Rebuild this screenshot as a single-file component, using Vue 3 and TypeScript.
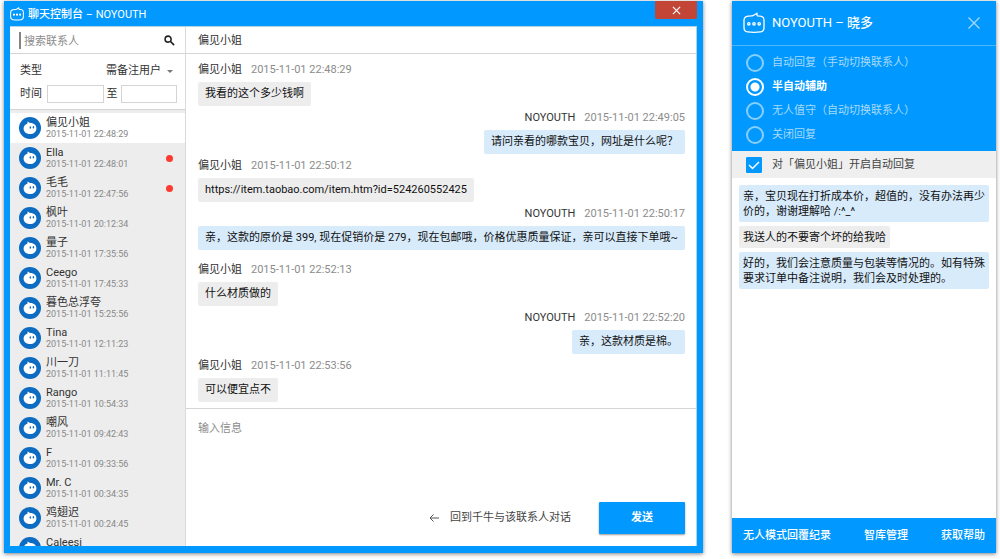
<script setup lang="ts">
import { ref } from 'vue'

interface Contact {
  name: string
  time: string
  unread?: boolean
}

interface Message {
  author: string
  time: string
  text: string
  own?: boolean
}

const shop = 'NOYOUTH'
const customer = '偏见小姐'

const contacts: Contact[] = [
  { name: customer, time: '2015-11-01 22:48:29' },
  { name: 'Ella', time: '2015-11-01 22:48:01', unread: true },
  { name: '毛毛', time: '2015-11-01 22:47:56', unread: true },
  { name: '枫叶', time: '2015-11-01 20:12:34' },
  { name: '量子', time: '2015-11-01 17:35:56' },
  { name: 'Ceego', time: '2015-11-01 17:45:33' },
  { name: '暮色总浮夸', time: '2015-11-01 15:25:56' },
  { name: 'Tina', time: '2015-11-01 12:11:23' },
  { name: '川一刀', time: '2015-11-01 11:11:45' },
  { name: 'Rango', time: '2015-11-01 10:54:33' },
  { name: '嘲风', time: '2015-11-01 09:42:43' },
  { name: 'F', time: '2015-11-01 09:33:56' },
  { name: 'Mr. C', time: '2015-11-01 00:34:35' },
  { name: '鸡翅迟', time: '2015-11-01 00:24:45' },
  { name: 'Caleesi', time: '' },
]

const sessions: Message[][] = [
  [
    { author: customer, time: '2015-11-01 22:48:29', text: '我看的这个多少钱啊' },
    { author: shop, time: '2015-11-01 22:49:05', text: '请问亲看的哪款宝贝，网址是什么呢？', own: true },
    { author: customer, time: '2015-11-01 22:50:12', text: 'https://item.taobao.com/item.htm?id=524260552425' },
    {
      author: shop,
      time: '2015-11-01 22:50:17',
      text: '亲，这款的原价是 399, 现在促销价是 279，现在包邮哦，价格优惠质量保证，亲可以直接下单哦~',
      own: true,
    },
  ],
  [
    { author: customer, time: '2015-11-01 22:52:13', text: '什么材质做的' },
    { author: shop, time: '2015-11-01 22:52:20', text: '亲，这款材质是棉。', own: true },
    { author: customer, time: '2015-11-01 22:53:56', text: '可以便宜点不' },
  ],
]

const modes = ['自动回复（手动切换联系人）', '半自动辅助', '无人值守（自动切换联系人）', '关闭回复']

const suggestions = [
  { text: '亲，宝贝现在打折成本价，超值的，没有办法再少价的，谢谢理解哈 /:^_^', own: true },
  { text: '我送人的不要寄个坏的给我哈', own: false },
  { text: '好的，我们会注意质量与包装等情况的。如有特殊要求订单中备注说明，我们会及时处理的。', own: true },
]

const links = ['无人模式回覆纪录', '智库管理', '获取帮助']

const active = ref(0)
const mode = ref(1)
const autoReply = ref(true)
const keyword = ref('')
const from = ref('')
const to = ref('')
const kind = ref('需备注用户')
const draft = ref('')
</script>

<template>
  <div class="desktop">
    <section class="window">
      <header class="titlebar">
        <svg class="logo-small" viewBox="0 0 22 22" aria-hidden="true">
          <path d="M5 4.200C7 3.900 8.500 3.900 9.300 3.800C11 3.200 12.500 2.300 14 1.200C13.900 2.200 14 3 14.300 3.800C15.500 3.800 16.500 3.900 17.500 4.100C20 4.500 21 5.800 21 8V15.500C21 18.500 20 19.600 17.500 19.900C13 20.500 9 20.500 4.500 19.900C2 19.600 1 18.500 1 15.500V8.500C1 6 2.200 4.600 5 4.200Z" />
          <circle cx="6.200" cy="12" r="0.900" /><circle cx="11" cy="12" r="0.900" /><circle cx="15.800" cy="12" r="0.900" />
        </svg>
        <h1>聊天控制台 <span>– {{ shop }}</span></h1>
        <button class="close" type="button" aria-label="关闭">
          <svg viewBox="0 0 10 10" aria-hidden="true"><path d="M1 1L9 9M9 1L1 9" /></svg>
        </button>
      </header>

      <div class="body">
        <aside class="sidebar">
          <label class="search">
            <input v-model="keyword" type="text" placeholder="搜索联系人" aria-label="搜索联系人" />
            <svg viewBox="0 0 12 12" aria-hidden="true">
              <circle cx="4.500" cy="4.500" r="3.300" /><path d="M7 7L11 11" />
            </svg>
          </label>
          <div class="filters">
            <div class="filter">
              <label for="kind">类型</label>
              <select id="kind" v-model="kind">
                <option>需备注用户</option>
              </select>
              <svg class="arrow" viewBox="0 0 6 3" aria-hidden="true"><path d="M0 0H6L3 3Z" /></svg>
            </div>
            <div class="filter">
              <label for="from">时间</label>
              <input id="from" v-model="from" type="text" />
              <label for="to">至</label>
              <input id="to" v-model="to" type="text" />
            </div>
          </div>
          <ul class="contacts">
            <li v-for="(c, i) in contacts" :key="c.name">
              <button class="contact" :class="{ active: i === active }" type="button" @click="active = i">
                <svg class="avatar" viewBox="0 0 22 22" aria-hidden="true">
                  <circle cx="11" cy="11" r="11" fill="#0d6cc1" />
                  <path
                    d="M8.300 4.800C9.600 4.800 10.200 5.400 10.800 6.100C14.900 5.900 17.500 8.300 17.400 11.500C17.300 15 14.700 17 11 17C7.200 17 4.600 14.800 4.600 11.500C4.600 9.200 6 7.300 8.200 6.700C8.700 6.200 8.700 5.400 8.300 4.800Z"
                    fill="#fff"
                  />
                  <ellipse cx="11.300" cy="10.500" rx="0.700" ry="1.300" fill="#0d6cc1" />
                  <ellipse cx="14.400" cy="10.300" rx="0.700" ry="1.300" fill="#0d6cc1" />
                </svg>
                <span class="who">
                  <span class="name">{{ c.name }}</span>
                  <time>{{ c.time }}</time>
                </span>
                <span v-if="c.unread" class="dot"></span>
              </button>
            </li>
          </ul>
        </aside>

        <main class="chat">
          <h2>{{ customer }}</h2>
          <div class="history">
            <div v-for="(session, s) in sessions" :key="s" class="session">
              <article v-for="m in session" :key="m.time" class="message" :class="{ own: m.own }">
                <div class="meta">
                  <span>{{ m.author }}</span>
                  <time>{{ m.time }}</time>
                </div>
                <p class="bubble">{{ m.text }}</p>
              </article>
            </div>
          </div>
          <form class="composer" @submit.prevent="draft = ''">
            <textarea v-model="draft" placeholder="输入信息" aria-label="输入信息"></textarea>
            <div class="actions">
              <a href="#">
                <svg viewBox="0 0 10 8" aria-hidden="true"><path d="M10 4H1M4.500 0.500L1 4L4.500 7.500" /></svg>
                回到千牛与该联系人对话
              </a>
              <button type="submit">发送</button>
            </div>
          </form>
        </main>
      </div>
    </section>

    <section class="panel">
      <header class="panel-head">
        <svg class="logo" viewBox="0 0 22 22" aria-hidden="true">
          <path d="M5 4.200C7 3.900 8.500 3.900 9.300 3.800C11 3.200 12.500 2.300 14 1.200C13.900 2.200 14 3 14.300 3.800C15.500 3.800 16.500 3.900 17.500 4.100C20 4.500 21 5.800 21 8V15.500C21 18.500 20 19.600 17.500 19.900C13 20.500 9 20.500 4.500 19.900C2 19.600 1 18.500 1 15.500V8.500C1 6 2.200 4.600 5 4.200Z" />
          <circle cx="5.800" cy="11.800" r="1.200" /><circle cx="11" cy="11.800" r="1.200" /><circle cx="16.200" cy="11.800" r="1.200" />
        </svg>
        <h2>{{ shop }} – <b>晓多</b></h2>
        <button type="button" aria-label="关闭">
          <svg viewBox="0 0 12 12" aria-hidden="true"><path d="M0.500 0.500L11.500 11.500M11.500 0.500L0.500 11.500" /></svg>
        </button>
      </header>
      <div class="modes" role="radiogroup" aria-label="回复模式">
        <label v-for="(label, i) in modes" :key="label" :class="{ on: i === mode }">
          <input v-model="mode" type="radio" name="mode" :value="i" />
          {{ label }}
        </label>
      </div>
      <label class="auto">
        <input v-model="autoReply" type="checkbox" />
        对「{{ customer }}」开启自动回复
      </label>
      <div class="suggestions">
        <p v-for="s in suggestions" :key="s.text" :class="{ own: s.own }">{{ s.text }}</p>
      </div>
      <nav>
        <a v-for="l in links" :key="l" href="#">{{ l }}</a>
      </nav>
    </section>
  </div>
</template>

<style>
body {
  margin: 0;
  background: #fff;
}
</style>

<style scoped>
.desktop,
.desktop * {
  box-sizing: border-box;
}

.desktop {
  display: grid;
  grid-template-columns: minmax(0, 1fr) 264px;
  grid-template-rows: minmax(0, 1fr);
  gap: 29px;
  height: 100vh;
  padding: 1px 4px 6px;
  font: 11px/16px Roboto, 'Noto Sans CJK SC', sans-serif;
  color: #333;
}

h1,
h2,
p,
ul {
  margin: 0;
  padding: 0;
}

h1,
h2 {
  font-size: 11px;
  font-weight: 400;
}

button,
input,
select,
textarea {
  margin: 0;
  padding: 0;
  border: 0;
  border-radius: 0;
  outline: 0;
  background: none;
  font: inherit;
  color: inherit;
}

button {
  cursor: pointer;
}

svg {
  flex: none;
}

.window,
.panel {
  display: flex;
  flex-direction: column;
  min-height: 0;
  box-shadow: 0 1px 4px rgba(0, 0, 0, 0.5);
}

.window {
  padding: 0 6px 7px;
  background: #0198ff;
}

.titlebar {
  display: flex;
  align-items: center;
  height: 25px;
  color: #fff;
}

.titlebar h1 {
  flex: 1;
  padding: 2px 0 0 4px;
  font-weight: 500;
}

.titlebar h1 span {
  font-weight: 400;
}

.logo-small {
  width: 14px;
  height: 14px;
}

.logo-small,
.logo {
  fill: none;
  stroke: #fff;
  stroke-width: 1.3;
  stroke-linejoin: round;
}

.logo-small {
  stroke-width: 1.6;
}

.close {
  display: flex;
  align-items: center;
  justify-content: center;
  align-self: flex-start;
  width: 42px;
  height: 18px;
  border-radius: 0 0 2px 2px;
  background: #c24535;
}

.close svg {
  width: 9px;
  height: 9px;
  fill: none;
  stroke: #fff;
  stroke-width: 1.3;
}

.body {
  display: grid;
  grid-template-columns: 176px minmax(0, 1fr);
  flex: 1;
  min-height: 0;
  border: solid #b5d3e8;
  border-width: 1px 1px 0 0;
  background: #fff;
}

.sidebar {
  display: flex;
  flex-direction: column;
  min-height: 0;
  border-right: 1px solid #dadada;
}

.search {
  display: flex;
  align-items: center;
  height: 27px;
  padding: 0 10px 0 9px;
  border-bottom: 1px solid #d4d4d4;
}

.search input {
  flex: 1;
  min-width: 0;
  height: 17px;
  padding: 2px 0 0 3px;
  border-left: 2px solid #858585;
}

.search svg {
  width: 11px;
  height: 11px;
  fill: none;
  stroke: #222;
  stroke-width: 1.7;
}

::placeholder {
  color: #8c8c8c;
  opacity: 1;
}

.filters {
  display: flex;
  flex-direction: column;
  gap: 5px;
  padding: 8px 8px 6px 10px;
  border-bottom: 1px solid #d4d4d4;
}

.filter {
  display: flex;
  align-items: center;
  gap: 3px;
  height: 18px;
}

.filter label:first-child {
  margin-right: 2px;
}

.filter select {
  margin-left: auto;
  appearance: none;
  text-align: right;
}

.arrow {
  width: 6px;
  height: 3px;
  margin: 0 4px 0 3px;
  fill: #777;
}

.filter input {
  flex: 1;
  min-width: 0;
  height: 18px;
  border: 1px solid #d4d4d4;
}

.contacts {
  flex: 1;
  min-height: 0;
  overflow: hidden;
  padding-top: 3px;
  background: #ededed;
  list-style: none;
}

.contact {
  display: flex;
  align-items: center;
  gap: 5px;
  width: 100%;
  height: 30px;
  padding: 0 12px 0 9px;
  text-align: left;
}

.contact.active {
  background: #fff;
}

.avatar {
  width: 22px;
  height: 22px;
}

.who {
  display: flex;
  flex: 1;
  flex-direction: column;
}

.name {
  line-height: 13px;
}

.who time {
  height: 11px;
  font-size: 9px;
  line-height: 11px;
  color: #888;
}

.dot {
  width: 7px;
  height: 7px;
  border-radius: 50%;
  background: #fb3b30;
}

.chat {
  display: flex;
  flex-direction: column;
  min-width: 0;
  min-height: 0;
}

.chat h2 {
  height: 27px;
  padding-left: 12px;
  border-bottom: 1px solid #d4d4d4;
  line-height: 28px;
}

.history {
  display: flex;
  flex-direction: column;
  gap: 12px;
  padding: 8px 11px 6px 8px;
  border-bottom: 1px solid #d4d4d4;
}

.session {
  display: flex;
  flex-direction: column;
  gap: 4px;
}

.message {
  display: flex;
  flex-direction: column;
  align-items: flex-start;
  gap: 4px;
  padding-left: 4px;
}

.message.own {
  align-items: flex-end;
  padding-left: 0;
}

.meta {
  display: flex;
  gap: 9px;
}

.meta time {
  color: #8c8c8c;
}

.bubble {
  padding: 4px 7px;
  border-radius: 2px;
  background: #ededed;
  color: #111;
}

.own .bubble {
  background: #d7ebfb;
}

.composer {
  display: flex;
  flex: 1;
  flex-direction: column;
  min-height: 0;
  padding: 12px 11px 12px 12px;
}

.composer textarea {
  flex: 1;
  min-height: 0;
  resize: none;
}

.actions {
  display: flex;
  align-items: center;
  justify-content: flex-end;
  gap: 28px;
}

.actions a {
  display: flex;
  align-items: center;
  gap: 11px;
  color: #444;
  text-decoration: none;
}

.actions svg {
  width: 10px;
  height: 8px;
  fill: none;
  stroke: #555;
}

.actions button {
  width: 86px;
  height: 32px;
  border-radius: 1px;
  background: #0198ff;
  box-shadow: 0 1px 2px rgba(0, 0, 0, 0.4);
  color: #fff;
  font-weight: 700;
}

.panel {
  background: #fff;
}

.panel-head {
  display: flex;
  align-items: center;
  height: 45px;
  padding: 0 16px 0 11px;
  border-bottom: 1px solid #4db5fb;
  background: #0198ff;
  color: #fff;
}

.logo {
  width: 22px;
  height: 22px;
}

.panel-head h2 {
  flex: 1;
  padding-left: 7px;
  font-size: 13px;
}

.panel-head b {
  font-weight: 500;
}

.panel-head button {
  display: flex;
}

.panel-head button svg {
  width: 12px;
  height: 12px;
  fill: none;
  stroke: #a6dafc;
  stroke-width: 1.3;
}

.modes {
  padding: 5px 14px 4px;
  background: #0198ff;
  color: #a6dafc;
}

.modes label,
.auto {
  display: flex;
  align-items: center;
  gap: 8px;
  height: 24px;
}

.modes .on {
  color: #fff;
  font-weight: 700;
}

.modes input {
  width: 18px;
  height: 18px;
  appearance: none;
  border: 2px solid #8acefb;
  border-radius: 50%;
}

.modes input:checked {
  border-color: #fff;
  background: radial-gradient(circle, #fff 4px, transparent 5px);
}

.auto {
  height: 27px;
  padding: 0 14px;
  gap: 10px;
  background: #efefef;
  color: #444;
}

.auto input {
  width: 16px;
  height: 16px;
  appearance: none;
  border: 1px solid #0198ff;
  border-radius: 1px;
}

.auto input:checked {
  background: #0198ff
    url("data:image/svg+xml,%3Csvg xmlns='http://www.w3.org/2000/svg' viewBox='0 0 14 14'%3E%3Cpath d='M2 7L5.500 10.500L12 4' fill='none' stroke='white' stroke-width='1.500'/%3E%3C/svg%3E");
}

.suggestions {
  display: flex;
  flex: 1;
  flex-direction: column;
  align-items: flex-start;
  gap: 4px;
  min-height: 0;
  padding: 7px;
}

.suggestions p {
  padding: 4px 4px 3px;
  border-radius: 2px;
  background: #ededed;
  line-height: 15px;
  color: #111;
}

.suggestions .own {
  background: #d7ebfb;
}

nav {
  display: flex;
  align-items: center;
  justify-content: space-between;
  height: 35px;
  padding: 0 11px;
  background: #0198ff;
}

nav a {
  color: #fff;
  font-weight: 500;
  text-decoration: none;
}
</style>
